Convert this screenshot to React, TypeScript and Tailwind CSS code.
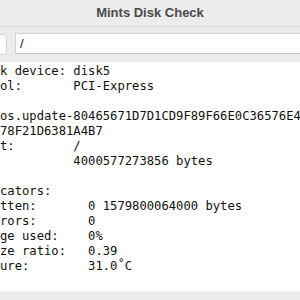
import React from "react";

const lines: string[] = [
  "k device: disk5",
  "ol:       PCI-Express",
  "",
  "os.update-80465671D7D1CD9F89F66E0C36576E4",
  "78F21D6381A4B7",
  "t:        /",
  "          4000577273856 bytes",
  "",
  "cators:",
  "tten:       0 1579800064000 bytes",
  "rors:       0",
  "ge used:    0%",
  "ze ratio:   0.39",
  "ure:        31.0˚C",
];

export default function App() {
  return (
    <div className="w-[300px] h-[300px] overflow-hidden flex flex-col bg-[#ececec]">
      <div className="h-[27px] shrink-0 flex items-center justify-center border-b border-[#d9d9d9]">
        <span
          className="text-[13px] font-bold text-[#4a4a4a]"
          style={{ fontFamily: '"Liberation Sans", Arial, sans-serif' }}
        >
          Mints Disk Check
        </span>
      </div>
      <div className="h-[35px] shrink-0 flex items-start pt-[6px] gap-[8px]">
        <div className="w-[7px] h-[21px] mt-[1px] shrink-0 bg-white rounded-r-[5px] border border-l-0 border-[#d2d2d2]" />
        <div
          className="flex-1 min-w-[300px] h-[21px] bg-white border border-[#d4d4d4] border-b-[#c4c4c4] flex items-center pl-[4px] text-[13px] text-[#1a1a1a]"
          style={{ fontFamily: '"Liberation Sans", Arial, sans-serif' }}
        >
          /
        </div>
      </div>
      <div
        className="h-[229px] shrink-0 bg-white pt-[2px] overflow-hidden text-[12.2px] leading-[15px] text-[#111] whitespace-pre"
        style={{ fontFamily: '"DejaVu Sans Mono", "Liberation Mono", monospace' }}
      >
        {lines.map((l, i) => (
          <div key={i} className="h-[15px]">
            {l}
          </div>
        ))}
      </div>
      <div className="flex-1 bg-[#ececec]" />
    </div>
  );
}
